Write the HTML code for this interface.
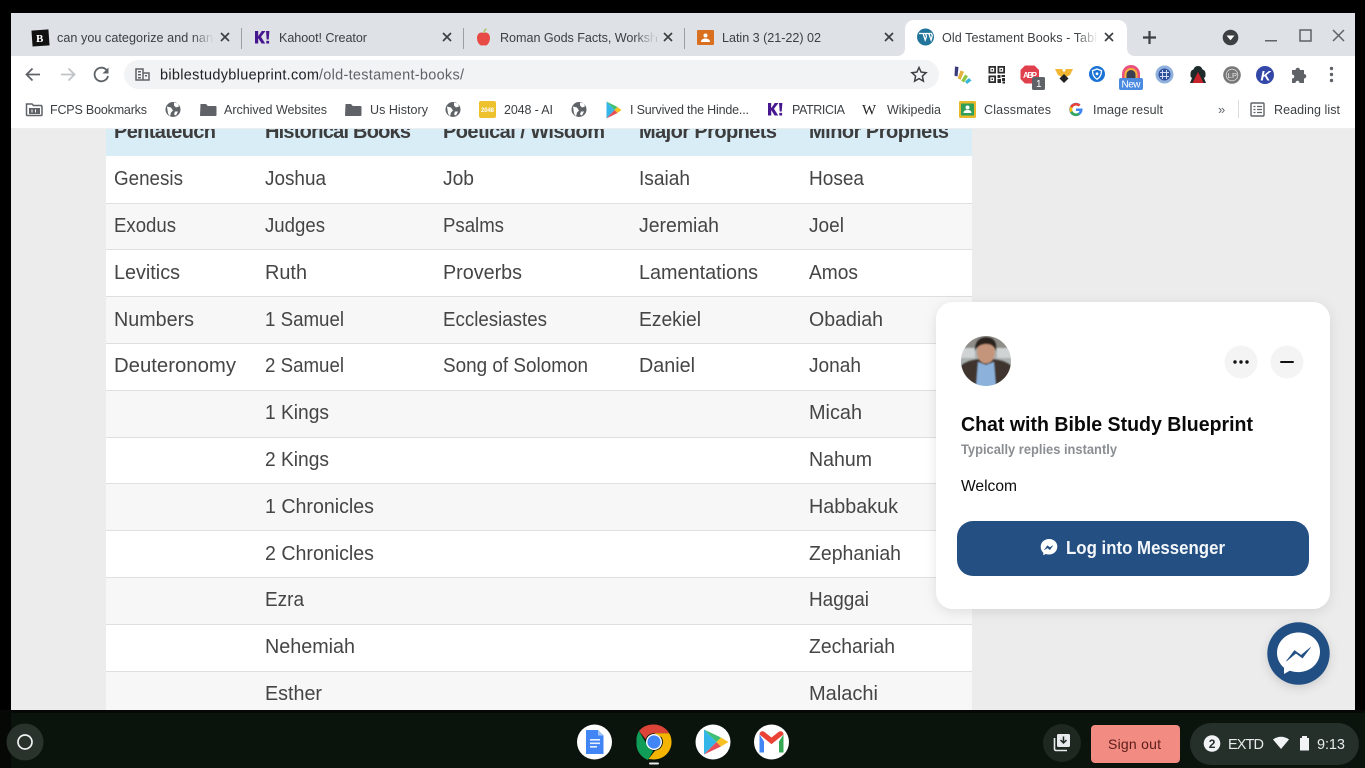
<!DOCTYPE html>
<html lang="en">
<head>
<meta charset="utf-8">
<title>Old Testament Books</title>
<style>
html,body{margin:0;padding:0;background:#000;width:1365px;height:768px;overflow:hidden}
svg{display:block;font-family:"Liberation Sans",sans-serif}
.tab{font-size:12.6px;fill:#3c4043}
.bm{font-size:12.5px;fill:#3c4043}
.c{font-size:20px;fill:#454545}
.h{font-size:20px;font-weight:bold;fill:#3d3d3d}
.x{stroke:#3c4043;stroke-width:1.7;fill:none}
</style>
</head>
<body>
<svg xmlns="http://www.w3.org/2000/svg" width="1365" height="768" viewBox="0 0 1365 768">
<defs>
<linearGradient id="fg" x1="0" x2="1" y1="0" y2="0"><stop offset="0" stop-color="#dee1e6" stop-opacity="0"/><stop offset="1" stop-color="#dee1e6"/></linearGradient>
<linearGradient id="fw" x1="0" x2="1" y1="0" y2="0"><stop offset="0" stop-color="#fff" stop-opacity="0"/><stop offset="1" stop-color="#fff"/></linearGradient>
<filter id="sh" x="-20%" y="-20%" width="140%" height="140%"><feDropShadow dx="0" dy="3" stdDeviation="6" flood-color="#000" flood-opacity=".1"/></filter>
<filter id="sh2" x="-30%" y="-30%" width="160%" height="160%"><feDropShadow dx="0" dy="3" stdDeviation="5" flood-color="#000" flood-opacity=".14"/></filter>
<filter id="soft"><feGaussianBlur stdDeviation=".7"/></filter>
<clipPath id="pg"><rect x="11" y="129" width="1344" height="581"/></clipPath>
<clipPath id="av"><circle cx="986" cy="361" r="25"/></clipPath>
<g id="globe"><circle r="7.5" fill="#5f6368"/><path d="M-6-3l4 1 2 3-2 2-1 4-2-3zM1-7l4 1 1 3-3 1-2-2zM2 2l3 0-2 4-2-1z" fill="#fff"/></g>
<g id="folder"><path d="M-7.500-5.500h5.500l1.800 2h7.700a1 1 0 0 1 1 1v8a1 1 0 0 1-1 1h-15a.5.5 0 0 1-.5-.5z" fill="#5f6368"/></g>
<g id="kh"><path d="M-7-6.500h3.200v5.200l3.600-5.200h3.700L-1-.8l4.200 6.800H-.4l-3.400-5.400V6H-7z" fill="#46178f"/><path d="M4-6.500h3.400L6.700 2H4.700zM4.300 3.400h2.800V6H4.300z" fill="#46178f"/></g>
</defs>

<rect width="1365" height="768" fill="#000"/>

<!-- tab strip -->
<rect x="11" y="13" width="1344" height="43" fill="#dee1e6"/>
<rect x="32" y="30" width="17" height="16" fill="#111" transform="rotate(-4 40 38)"/>
<text x="36" y="42" font-size="11" font-weight="bold" fill="#fff" font-family="Liberation Serif,serif">B</text>
<text class="tab" x="57" y="42" textLength="156">can you categorize and nan</text>
<rect x="192" y="24" width="22" height="26" fill="url(#fg)"/>
<path class="x" d="M221 33l8 8M229 33l-8 8"/>
<rect x="241" y="28" width="1" height="21" fill="#9aa0a6"/>
<use href="#kh" transform="translate(262 37.500)"/>
<text class="tab" x="279" y="42" textLength="88">Kahoot! Creator</text>
<path class="x" d="M443 33l8 8M451 33l-8 8"/>
<rect x="463" y="28" width="1" height="21" fill="#9aa0a6"/>
<path d="M483.500 33c-3-1.500-6.500.500-6.500 5 0 4.500 3 8 5 7.500.8-.2 2.200-.2 3 0 2 .5 5-3 5-7.500 0-4.500-3.500-6.500-6.500-5z" fill="#e84a45"/>
<path d="M484 33c0-2 1-3.500 2.500-4" stroke="#a9c46c" stroke-width="1.500" fill="none"/>
<text class="tab" x="500" y="42" textLength="157">Roman Gods Facts, Worksh</text>
<rect x="634" y="24" width="22" height="26" fill="url(#fg)"/>
<path class="x" d="M664 33l8 8M672 33l-8 8"/>
<rect x="684" y="28" width="1" height="21" fill="#9aa0a6"/>
<rect x="697" y="30" width="17" height="15" rx="1" fill="#d9701f"/>
<circle cx="705.500" cy="35.500" r="2" fill="#fff"/><path d="M701 42c0-2.500 2-3.500 4.500-3.500s4.500 1 4.500 3.500z" fill="#fff"/>
<text class="tab" x="722" y="42" textLength="99">Latin 3 (21-22) 02</text>
<path class="x" d="M885 33l8 8M893 33l-8 8"/>

<!-- active tab -->
<path d="M897 56c5 0 8-3 8-8V29c0-5 4-9 9-9h204c5 0 9 4 9 9v19c0 5 3 8 8 8z" fill="#fff"/>
<circle cx="925.500" cy="37" r="8.500" fill="#21759b"/>
<path d="M919 33.500h5l-.8.500 2 6 1.300-3.500-.8-2.500-.8-.500h5l-.9.500 2.100 6 1-3.500c.5-1.800-.4-2.400-.8-3" stroke="#fff" stroke-width="1.300" fill="none"/>
<text class="tab" x="942" y="42" textLength="155">Old Testament Books - Tabl</text>
<rect x="1076" y="24" width="22" height="26" fill="url(#fw)"/>
<path class="x" d="M1105 33l8 8M1113 33l-8 8"/>
<path d="M1149.500 31v13M1143 37.500h13" stroke="#3c4043" stroke-width="2.200" fill="none"/>

<!-- window controls -->
<circle cx="1230.500" cy="37.500" r="7.800" fill="#3c4043"/><path d="M1226.500 35.500h8l-4 4.800z" fill="#fff"/>
<rect x="1265" y="40" width="12" height="1.500" fill="#5f6368"/>
<rect x="1300" y="30" width="11" height="11" fill="none" stroke="#5f6368" stroke-width="1.500"/>
<path d="M1333 30l11 11M1344 30l-11 11" stroke="#5f6368" stroke-width="1.500"/>

<!-- toolbar -->
<rect x="11" y="56" width="1344" height="73" fill="#fff"/>
<rect x="11" y="128.500" width="1344" height="1" fill="#dadce0"/>
<path d="M40 74.500H27M32.500 68.500l-6 6 6 6" stroke="#5f6368" stroke-width="1.800" fill="none"/>
<path d="M61 74.500h13M68.500 68.500l6 6-6 6" stroke="#c0c3c7" stroke-width="1.800" fill="none"/>
<path d="M106.500 70a6.800 6.800 0 1 0 1.500 6" stroke="#5f6368" stroke-width="1.800" fill="none"/><path d="M108.500 67.500v6h-6z" fill="#5f6368"/>
<rect x="124" y="60" width="815" height="29" rx="14.500" fill="#f1f3f4"/>
<path d="M136 69h7v11h-7zM143 73h6v7h-6z" fill="none" stroke="#5f6368" stroke-width="1.500"/><path d="M138 71h3v1.500h-3zM138 74h3v1.500h-3zM138 77h3v1.500h-3zM145 75h2v1.500h-2z" fill="#5f6368"/>
<text x="160" y="79.500" font-size="14.500" fill="#202124" textLength="159">biblestudyblueprint.com</text>
<text x="319" y="79.500" font-size="14.500" fill="#5f6368" textLength="145">/old-testament-books/</text>
<path d="M919 67.500l2.100 4.600 5 .6-3.700 3.400 1 5-4.400-2.500-4.400 2.500 1-5-3.700-3.400 5-.6z" fill="none" stroke="#3c4043" stroke-width="1.500"/>

<!-- extensions -->
<path d="M955 66.500l3.500.5-1 9.500-3-.8z" fill="#3a3a7a"/><path d="M960.500 70.500l3.500 1.300-3.300 8-3-1.300z" fill="#e3b23c"/><path d="M965 74.500l3 1.800-4 6.200-2.700-1.800z" fill="#8cc63f"/><path d="M969 78l2.500 2.500-4.500 3.500-2-2.500z" fill="#38b7d8"/>
<g fill="#2b2b2b"><path d="M988.500 66h7.500v7.500h-7.500zm1.800 1.800v3.900h3.900v-3.900zM997.500 66h7.500v7.500h-7.500zm1.800 1.800v3.900h3.900v-3.900zM988.500 75.500h7.500V83h-7.500zm1.800 1.800v3.900h3.900v-3.900z"/><rect x="991.500" y="69" width="1.500" height="1.500"/><rect x="1000.500" y="69" width="1.500" height="1.500"/><rect x="991.500" y="78.500" width="1.500" height="1.500"/><rect x="997.500" y="75" width="3" height="3"/><rect x="1001.500" y="75" width="3.500" height="2"/><rect x="1002" y="78" width="3" height="3"/><rect x="997.500" y="79" width="3.500" height="4"/><rect x="1002.500" y="81.500" width="2.500" height="2"/></g>
<path d="M1025 65.500h9.500l4.500 4.500v9l-4.500 4.500H1025l-4.500-4.500v-9z" fill="#e0404c"/>
<text x="1023" y="78" font-size="8" font-weight="bold" fill="#fff" textLength="14">ABP</text>
<rect x="1032" y="77" width="13" height="13" rx="1.500" fill="#5f6368"/><text x="1036" y="87" font-size="10" fill="#fff">1</text>
<path d="M1055 69h7l2 3.500 2-3.500h7l-3 6-6 3-6-3z" fill="#f2b632"/><path d="M1064 74l4.500 4.500-4.500 4.500-4.500-4.500z" fill="#222"/>
<path d="M1089 74a8 8 0 1 0 16 0a8 8 0 1 0-16 0z" fill="#1b73d6"/><path d="M1097 69l4.500 1.700c0 3.500-1 6.500-4.500 8.500-3.500-2-4.500-5-4.500-8.500z" fill="none" stroke="#fff" stroke-width="1.300"/><circle cx="1097" cy="73.800" r="1.400" fill="#fff"/>
<path d="M1122 79v-5a9 9 0 0 1 18 0v5z" fill="#e9527f"/><path d="M1124.500 79v-4.500a6.500 6.500 0 0 1 13 0V79z" fill="#f4b23c"/><path d="M1126.500 79v-4.500a4.500 4.500 0 0 1 9 0V79z" fill="#3a4050"/>
<rect x="1119" y="78" width="24" height="12" rx="2" fill="#4a8be0"/><text x="1121.500" y="87.500" font-size="10" fill="#fff" textLength="19">New</text>
<circle cx="1164.500" cy="74.500" r="9" fill="#8fb0dc"/><circle cx="1164.500" cy="74.500" r="6" fill="#2e4f9c"/><path d="M1160 72.500h9M1160 76.500h9M1162.500 70v9M1166.500 70v9" stroke="#cfdcf2" stroke-width="1"/>
<path d="M1198 66c3 0 4 2 4.500 3.500 2 .5 3 2 3 4.500v2c0 1-1 1.500-1.500 2l2 5h-16l2-5c-.5-.5-1.500-1-1.500-2v-2c0-2.500 1-4 3-4.500.500-1.500 1.500-3.500 4.500-3.500z" fill="#1d2b2a"/><path d="M1198 72l5.500 11h-11z" fill="#c8222c"/>
<circle cx="1232" cy="75" r="8.800" fill="#777"/><circle cx="1232" cy="75" r="5.800" fill="none" stroke="#ddd" stroke-width=".8"/><text x="1227.800" y="78" font-size="7.500" fill="#eee">LP</text>
<circle cx="1265" cy="75" r="9" fill="#3347a8"/><text x="1260.500" y="80.500" font-size="14" font-weight="bold" font-style="italic" fill="#fff">K</text>
<path d="M1292 70h3.500c0-3 4.500-3 4.500 0h4v4c3 0 3 4.500 0 4.500v4.500h-4.500c0-3-4-3-4 0H1292v-4.500c3 0 3-4 0-4z" fill="#5f6368"/>
<circle cx="1331.500" cy="68.500" r="1.700" fill="#5f6368"/><circle cx="1331.500" cy="74.500" r="1.700" fill="#5f6368"/><circle cx="1331.500" cy="80.500" r="1.700" fill="#5f6368"/>

<!-- bookmarks -->
<path d="M26.500 104h5.500l1.500 1.500h7.500a1.500 1.500 0 0 1 1 1.500v7.500a1 1 0 0 1-1 1h-14a.7.7 0 0 1-.5-.7z" fill="none" stroke="#5f6368" stroke-width="1.500"/><path d="M29 108h11v6H29z" fill="#5f6368"/><path d="M32 109.500v3M35.500 109.500v3" stroke="#fff"/>
<text class="bm" x="50" y="114" textLength="97">FCPS Bookmarks</text>
<use href="#globe" transform="translate(173 109.500)"/>
<use href="#folder" transform="translate(208 109.500)"/>
<text class="bm" x="224" y="114" textLength="103">Archived Websites</text>
<use href="#folder" transform="translate(353 109.500)"/>
<text class="bm" x="370" y="114" textLength="58">Us History</text>
<use href="#globe" transform="translate(453 109.500)"/>
<rect x="479" y="101" width="17" height="17" rx="2" fill="#edc22e"/><text x="481" y="112" font-size="6" font-weight="bold" fill="#fff" textLength="13">2048</text>
<text class="bm" x="504" y="114" textLength="49">2048 - AI</text>
<use href="#globe" transform="translate(579 109.500)"/>
<path d="M606.500 101.500v17l8-8.500z" fill="#35b6e8"/><path d="M606.500 101.500l8 8.500 3-3z" fill="#3fbf74"/><path d="M606.500 118.500l8-8.500 3 3z" fill="#e84c56"/><path d="M617.500 107l-3 3 3 3 4-3z" fill="#f7c221"/>
<text class="bm" x="630" y="114" textLength="119">I Survived the Hinde...</text>
<use href="#kh" transform="translate(775 109.500)"/>
<text class="bm" x="792" y="114" textLength="53">PATRICIA</text>
<text x="862" y="114.500" font-size="15" font-family="Liberation Serif,serif" fill="#222" textLength="16">W</text>
<text class="bm" x="887" y="114" textLength="54">Wikipedia</text>
<rect x="959" y="101" width="17" height="17" rx="1.500" fill="#e8b92b"/><rect x="961" y="103.500" width="13" height="12" fill="#2f9e58"/><circle cx="967.500" cy="107.500" r="2" fill="#fff"/><path d="M963.500 113c0-2 1.500-3 4-3s4 1 4 3z" fill="#fff"/>
<text class="bm" x="984" y="114" textLength="67">Classmates</text>
<path d="M1082 108.500h-6v2.500h3.500c-.5 1.600-1.900 2.500-3.500 2.500a4 4 0 0 1 0-8c1 0 1.900.4 2.600 1l1.900-1.900a6.700 6.700 0 1 0 2 3.900z" fill="#4285f4"/><path d="M1070.200 106.500l2.200 1.600a4 4 0 0 1 3.600-2.600c1 0 1.900.4 2.600 1l1.900-1.900a6.700 6.700 0 0 0-10.300 1.900z" fill="#ea4335"/><path d="M1070.200 112.500a6.700 6.700 0 0 0 9.700 2.200l-2-1.700a4 4 0 0 1-5.500-2z" fill="#34a853"/><path d="M1070.200 106.500a6.700 6.700 0 0 0 0 6l2.200-1.600a4 4 0 0 1 0-2.800z" fill="#fbbc05"/>
<text class="bm" x="1093" y="114" textLength="70">Image result</text>
<text x="1218" y="114" font-size="13" fill="#5f6368">»</text>
<rect x="1238" y="100" width="1" height="18" fill="#dadce0"/>
<rect x="1251" y="103" width="13" height="13" rx="1" fill="none" stroke="#5f6368" stroke-width="1.400"/><path d="M1253.500 106.500h2M1257 106.500h5M1253.500 109.500h2M1257 109.500h5M1253.500 112.500h2M1257 112.500h5" stroke="#5f6368" stroke-width="1.200"/>
<text class="bm" x="1274" y="114" textLength="66">Reading list</text>

<!-- page -->
<g clip-path="url(#pg)">
<rect x="11" y="129" width="1344" height="581" fill="#ececec"/>
<rect x="106" y="110" width="866" height="46" fill="#d9edf7"/>
<rect x="106" y="156" width="866" height="554" fill="#fff"/>
<g fill="#f7f7f7">
<rect x="106" y="203" width="866" height="47"/>
<rect x="106" y="296" width="866" height="47"/>
<rect x="106" y="390" width="866" height="47"/>
<rect x="106" y="483" width="866" height="47"/>
<rect x="106" y="577" width="866" height="47"/>
<rect x="106" y="671" width="866" height="39"/>
</g>
<g fill="#dfdfdf">
<rect x="106" y="203" width="866" height="1"/><rect x="106" y="249" width="866" height="1"/><rect x="106" y="296" width="866" height="1"/><rect x="106" y="343" width="866" height="1"/><rect x="106" y="390" width="866" height="1"/><rect x="106" y="437" width="866" height="1"/><rect x="106" y="483" width="866" height="1"/><rect x="106" y="530" width="866" height="1"/><rect x="106" y="577" width="866" height="1"/><rect x="106" y="624" width="866" height="1"/><rect x="106" y="671" width="866" height="1"/>
</g>
<text class="h" x="114" y="138" textLength="102">Pentateuch</text>
<text class="h" x="265" y="138" textLength="146">Historical Books</text>
<text class="h" x="443" y="138" textLength="162">Poetical / Wisdom</text>
<text class="h" x="639" y="138" textLength="138">Major Prophets</text>
<text class="h" x="809" y="138" textLength="140">Minor Prophets</text>

<text class="c" x="114" y="185" textLength="69" lengthAdjust="spacingAndGlyphs">Genesis</text>
<text class="c" x="265" y="185" textLength="61" lengthAdjust="spacingAndGlyphs">Joshua</text>
<text class="c" x="443" y="185" textLength="31" lengthAdjust="spacingAndGlyphs">Job</text>
<text class="c" x="639" y="185" textLength="51" lengthAdjust="spacingAndGlyphs">Isaiah</text>
<text class="c" x="809" y="185" textLength="55" lengthAdjust="spacingAndGlyphs">Hosea</text>

<text class="c" x="114" y="232" textLength="62" lengthAdjust="spacingAndGlyphs">Exodus</text>
<text class="c" x="265" y="232" textLength="60" lengthAdjust="spacingAndGlyphs">Judges</text>
<text class="c" x="443" y="232" textLength="61" lengthAdjust="spacingAndGlyphs">Psalms</text>
<text class="c" x="639" y="232" textLength="80" lengthAdjust="spacingAndGlyphs">Jeremiah</text>
<text class="c" x="809" y="232" textLength="35" lengthAdjust="spacingAndGlyphs">Joel</text>

<text class="c" x="114" y="279" textLength="66" lengthAdjust="spacingAndGlyphs">Levitics</text>
<text class="c" x="265" y="279" textLength="42" lengthAdjust="spacingAndGlyphs">Ruth</text>
<text class="c" x="443" y="279" textLength="79" lengthAdjust="spacingAndGlyphs">Proverbs</text>
<text class="c" x="639" y="279" textLength="119" lengthAdjust="spacingAndGlyphs">Lamentations</text>
<text class="c" x="809" y="279" textLength="49" lengthAdjust="spacingAndGlyphs">Amos</text>

<text class="c" x="114" y="326" textLength="80" lengthAdjust="spacingAndGlyphs">Numbers</text>
<text class="c" x="265" y="326" textLength="79" lengthAdjust="spacingAndGlyphs">1 Samuel</text>
<text class="c" x="443" y="326" textLength="104" lengthAdjust="spacingAndGlyphs">Ecclesiastes</text>
<text class="c" x="639" y="326" textLength="62" lengthAdjust="spacingAndGlyphs">Ezekiel</text>
<text class="c" x="809" y="326" textLength="74" lengthAdjust="spacingAndGlyphs">Obadiah</text>

<text class="c" x="114" y="372" textLength="122" lengthAdjust="spacingAndGlyphs">Deuteronomy</text>
<text class="c" x="265" y="372" textLength="79" lengthAdjust="spacingAndGlyphs">2 Samuel</text>
<text class="c" x="443" y="372" textLength="145" lengthAdjust="spacingAndGlyphs">Song of Solomon</text>
<text class="c" x="639" y="372" textLength="56" lengthAdjust="spacingAndGlyphs">Daniel</text>
<text class="c" x="809" y="372" textLength="52" lengthAdjust="spacingAndGlyphs">Jonah</text>

<text class="c" x="265" y="419" textLength="64" lengthAdjust="spacingAndGlyphs">1 Kings</text>
<text class="c" x="809" y="419" textLength="53" lengthAdjust="spacingAndGlyphs">Micah</text>
<text class="c" x="265" y="466" textLength="64" lengthAdjust="spacingAndGlyphs">2 Kings</text>
<text class="c" x="809" y="466" textLength="63" lengthAdjust="spacingAndGlyphs">Nahum</text>
<text class="c" x="265" y="513" textLength="109" lengthAdjust="spacingAndGlyphs">1 Chronicles</text>
<text class="c" x="809" y="513" textLength="89" lengthAdjust="spacingAndGlyphs">Habbakuk</text>
<text class="c" x="265" y="560" textLength="109" lengthAdjust="spacingAndGlyphs">2 Chronicles</text>
<text class="c" x="809" y="560" textLength="92" lengthAdjust="spacingAndGlyphs">Zephaniah</text>
<text class="c" x="265" y="606" textLength="39" lengthAdjust="spacingAndGlyphs">Ezra</text>
<text class="c" x="809" y="606" textLength="60" lengthAdjust="spacingAndGlyphs">Haggai</text>
<text class="c" x="265" y="653" textLength="90" lengthAdjust="spacingAndGlyphs">Nehemiah</text>
<text class="c" x="809" y="653" textLength="86" lengthAdjust="spacingAndGlyphs">Zechariah</text>
<text class="c" x="265" y="700" textLength="57" lengthAdjust="spacingAndGlyphs">Esther</text>
<text class="c" x="809" y="700" textLength="69" lengthAdjust="spacingAndGlyphs">Malachi</text>

<!-- chat card -->
<rect x="936" y="302" width="394" height="307" rx="17" fill="#fff" filter="url(#sh)"/>
<g clip-path="url(#av)">
<g filter="url(#soft)">
<rect x="959" y="334" width="54" height="54" fill="#aab0ae"/>
<rect x="959" y="334" width="54" height="14" fill="#8f8d88"/>
<rect x="959" y="348" width="16" height="10" fill="#cfd3d4"/>
<rect x="997" y="348" width="16" height="10" fill="#cfd3d4"/>
<path d="M959 388v-21c5-5 11-7 19-8h16c8 1 14 3 19 8v21z" fill="#40342e"/>
<path d="M978 362l8 3 8-3 2 26h-20z" fill="#8cb2dc"/>
<ellipse cx="986" cy="352" rx="9" ry="11.500" fill="#c4957a"/>
<path d="M975 351c-1-10 5-14 11-14 7 0 12 4 10 14-2-5-5-7-10-7-4 0-9 2-11 7z" fill="#2c211c"/>
</g>
</g>
<circle cx="1241" cy="362" r="16.500" fill="#f4f4f4"/>
<circle cx="1235" cy="362" r="1.700" fill="#111"/><circle cx="1241" cy="362" r="1.700" fill="#111"/><circle cx="1247" cy="362" r="1.700" fill="#111"/>
<circle cx="1287" cy="362" r="16.500" fill="#f4f4f4"/>
<rect x="1280" y="361" width="14" height="2" rx="1" fill="#111"/>
<text x="961" y="431" font-size="20.500" font-weight="bold" fill="#0a0a0a" textLength="292" lengthAdjust="spacingAndGlyphs">Chat with Bible Study Blueprint</text>
<text x="961" y="454" font-size="14" font-weight="bold" fill="#8a8d91" textLength="156" lengthAdjust="spacingAndGlyphs">Typically replies instantly</text>
<text x="961" y="491" font-size="16" fill="#0a0a0a" textLength="56" lengthAdjust="spacingAndGlyphs">Welcom</text>
<rect x="957" y="521" width="352" height="55" rx="16" fill="#244f82"/>
<path d="M1049 539c-4.700 0-8.300 3.400-8.300 7.900 0 2.400 1 4.400 2.600 5.800v2.600l2.400-1.300c1 .3 2.100.5 3.300.5 4.700 0 8.300-3.400 8.300-7.900s-3.600-7.600-8.300-7.600z" fill="#fff"/>
<path d="M1044.500 549.800l2.900-4.200 2.500 1.900 2.900-1.900-2.900 4.200-2.500-1.900z" fill="#244f82" stroke="#244f82" stroke-width=".5"/>
<text x="1066" y="554" font-size="18" font-weight="bold" fill="#f4f7fa" textLength="159" lengthAdjust="spacingAndGlyphs">Log into Messenger</text>

<!-- fab -->
<circle cx="1298.500" cy="653.500" r="31.200" fill="#235083" filter="url(#sh2)"/>
<path d="M1298.500 632.500c-12 0-21.500 9-21.500 20.300 0 6.100 2.700 11.400 7 15v6.200l5.700-3.200c2.700.8 5.700 1.300 8.800 1.300 12 0 21.500-9 21.500-20.300 0-11.300-9.500-19.300-21.500-19.300z" fill="#fff"/>
<path d="M1286.500 661l8-10.500 6.500 4.800 9.500-7.800-8 10.500-6.500-4.800z" fill="#235083" stroke="#235083" stroke-width=".6" stroke-linejoin="round"/>
</g>

<!-- shelf -->
<rect x="0" y="711" width="1365" height="57" fill="#0a130c"/>
<rect x="0" y="710" width="11" height="58" fill="#050805"/>
<rect x="0" y="710" width="1365" height="3" fill="#050805"/>
<circle cx="25" cy="742" r="18.500" fill="#2a322c"/>
<circle cx="25" cy="742" r="7" fill="none" stroke="#f1f3f4" stroke-width="1.700"/>

<circle cx="594.500" cy="742" r="17.500" fill="#fff"/>
<path d="M586 730h12l5.500 5.500V754H586z" fill="#4285f4"/><path d="M598 730l5.500 5.500H598z" fill="#a1c2fa"/><rect x="590" y="739" width="10" height="1.600" fill="#e8f0fe"/><rect x="590" y="742.500" width="10" height="1.600" fill="#e8f0fe"/><rect x="590" y="746" width="7" height="1.600" fill="#e8f0fe"/>

<path d="M654 724.500a17.500 17.500 0 0 1 15.200 8.750H654a8.800 8.800 0 0 0-8.400 6L639 731a17.500 17.500 0 0 1 15-6.500z" fill="#db4437"/>
<path d="M636.500 742a17.500 17.500 0 0 1 2.500-11l8 13.800a8.800 8.800 0 0 0 6.300 6l-5.400 9.200A17.500 17.500 0 0 1 636.500 742z" fill="#0f9d58"/>
<path d="M669.200 733.250A17.500 17.500 0 0 1 654 759.500l-5.500-.5 6.500-8.300a8.800 8.800 0 0 0 6.600-13.500l-7.600-3.950z" fill="#f4b400"/>
<circle cx="654" cy="742" r="8" fill="#fff"/><circle cx="654" cy="742" r="6.600" fill="#4285f4"/>
<rect x="649" y="762.500" width="10" height="2" rx="1" fill="#e8eaed"/>

<circle cx="713" cy="742" r="17.500" fill="#fff"/>
<path d="M704 729.500v25l12.500-12.500z" fill="#35b6e8"/><path d="M704 729.500l12.500 12.500 4.500-4.500z" fill="#3fbf74"/><path d="M704 754.500l12.500-12.500 4.500 4.500z" fill="#e84c56"/><path d="M721 737.500l-4.500 4.500 4.500 4.500 7.500-4.500z" fill="#f7c221"/>

<circle cx="771.500" cy="742" r="17.500" fill="#fff"/>
<path d="M759.500 734.500v18h4.500v-11z" fill="#4285f4"/><path d="M779 741.500v11h4.500v-18z" fill="#34a853"/>
<path d="M759.500 734.500c0-3 3-4 5-2.500l7 5.500 7-5.500c2-1.500 5-.5 5 2.500l-11.800 9.500h-.4z" fill="#ea4335"/>

<circle cx="1062" cy="743" r="19" fill="#1e2821"/>
<rect x="1057" y="734" width="13" height="13" rx="1.500" fill="#e8eaed"/><path d="M1063.500 736.500v6M1060.500 740l3 3 3-3" stroke="#1e2821" stroke-width="1.500" fill="none"/>
<path d="M1054.500 738v11a1.500 1.500 0 0 0 1.500 1.500h11" fill="none" stroke="#e8eaed" stroke-width="1.600"/>

<rect x="1091" y="725" width="89" height="38" rx="4" fill="#f28b82"/>
<text x="1108" y="749" font-size="14" fill="#5b1d19" textLength="53">Sign out</text>

<rect x="1190" y="723" width="169" height="42" rx="21" fill="#25302a"/>
<circle cx="1212" cy="743.500" r="8.300" fill="#f1f3f4"/>
<text x="1208.700" y="748" font-size="12" font-weight="bold" fill="#25302a">2</text>
<text x="1228" y="749" font-size="14.500" fill="#e8eaed" textLength="36">EXTD</text>
<path d="M1273 739.500c4.800-3.700 11.200-3.700 16 0l-8 9.500z" fill="#f1f3f4"/>
<path d="M1302 736h5v2h2v12.500h-9V738h2z" fill="#f1f3f4"/>
<text x="1317" y="749" font-size="14.500" fill="#e8eaed" textLength="28">9:13</text>
</svg>
</body>
</html>
